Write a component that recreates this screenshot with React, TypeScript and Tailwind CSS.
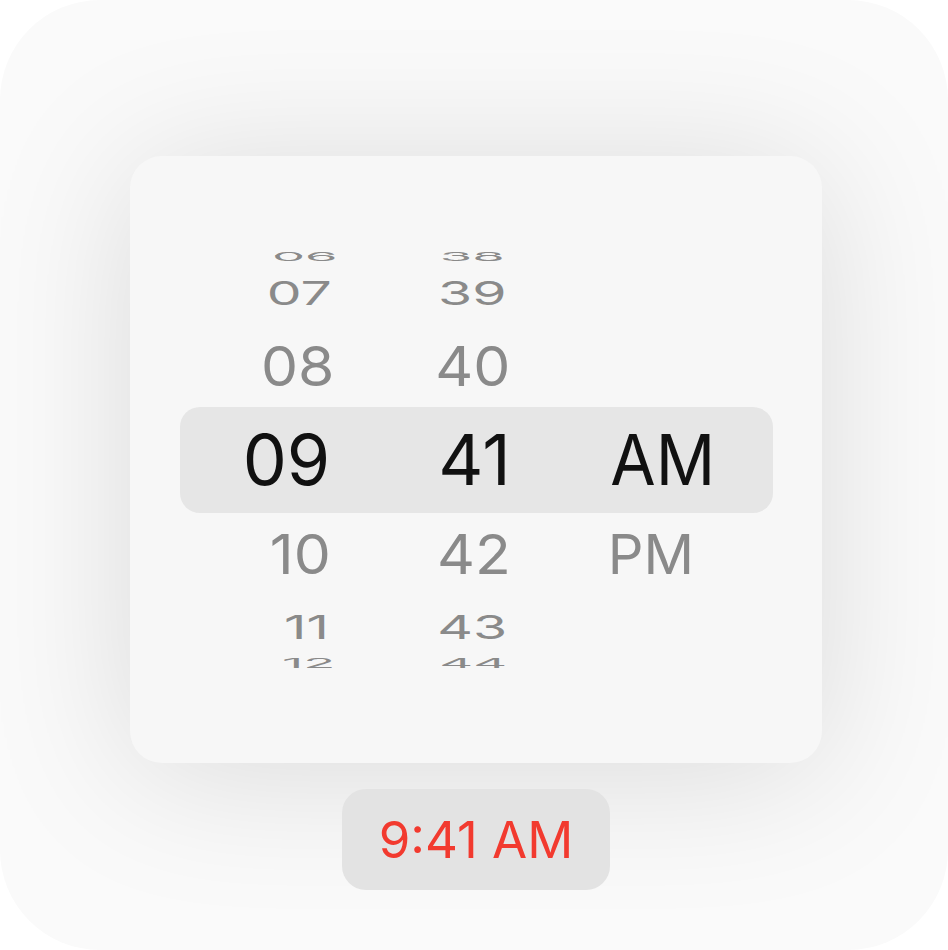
type Row = {
  label: string;
  slot: string;
  text: string;
};

// Wheel rows, top to bottom. The middle row is the selected value; the others
// are squeezed and pulled toward the wheel's vanishing point.
const hours: Row[] = [
  { label: "06", slot: "h-[20px]", text: "scale-x-[0.75] scale-y-[0.18] translate-x-[18px] text-[#8a8a8a]" },
  { label: "07", slot: "h-[52px]", text: "scale-x-[0.79] scale-y-[0.47] translate-x-[13px] text-[#8a8a8a]" },
  { label: "08", slot: "h-[94px]", text: "scale-x-[0.84] scale-y-[0.78] translate-x-[11px] text-[#8a8a8a]" },
  { label: "09", slot: "h-[94px]", text: "text-[#111111]" },
  { label: "10", slot: "h-[94px]", text: "scale-x-[0.84] scale-y-[0.78] translate-x-[14px] text-[#8a8a8a]" },
  { label: "11", slot: "h-[52px]", text: "scale-x-[0.79] scale-y-[0.47] translate-x-[20px] text-[#8a8a8a]" },
  { label: "12", slot: "h-[20px]", text: "scale-x-[0.75] scale-y-[0.18] translate-x-[22px] text-[#8a8a8a]" },
];

const minutes: Row[] = [
  { label: "38", slot: "h-[20px]", text: "scale-x-[0.75] scale-y-[0.18] -translate-x-[2px] text-[#8a8a8a]" },
  { label: "39", slot: "h-[52px]", text: "scale-x-[0.79] scale-y-[0.47] -translate-x-[2px] text-[#8a8a8a]" },
  { label: "40", slot: "h-[94px]", text: "scale-x-[0.84] scale-y-[0.78] -translate-x-[2px] text-[#8a8a8a]" },
  { label: "41", slot: "h-[94px]", text: "text-[#111111]" },
  { label: "42", slot: "h-[94px]", text: "scale-x-[0.84] scale-y-[0.78] -translate-x-[1px] text-[#8a8a8a]" },
  { label: "43", slot: "h-[52px]", text: "scale-x-[0.79] scale-y-[0.47] -translate-x-[2px] text-[#8a8a8a]" },
  { label: "44", slot: "h-[20px]", text: "scale-x-[0.75] scale-y-[0.18] -translate-x-[1px] text-[#8a8a8a]" },
];

const period: Row[] = [
  { label: "", slot: "h-[20px]", text: "" },
  { label: "", slot: "h-[52px]", text: "" },
  { label: "", slot: "h-[94px]", text: "" },
  { label: "AM", slot: "h-[94px]", text: "scale-x-[0.94] text-[#111111]" },
  { label: "PM", slot: "h-[94px]", text: "scale-x-[0.8] scale-y-[0.78] -translate-x-[12px] text-[#8a8a8a]" },
  { label: "", slot: "h-[52px]", text: "" },
  { label: "", slot: "h-[20px]", text: "" },
];

function Wheel({ rows }: { rows: Row[] }) {
  return (
    <div className="flex h-[416px] w-[188px] flex-col justify-center overflow-hidden">
      <div className="flex shrink-0 flex-col">
        {rows.map((row, i) => (
          <div key={i} className={`flex shrink-0 items-center justify-center ${row.slot}`}>
            <span className={`text-[70px] leading-none whitespace-nowrap ${row.text}`}>
              {row.label}
            </span>
          </div>
        ))}
      </div>
    </div>
  );
}

export default function App() {
  return (
    <div className="bg-white" style={{ fontFamily: "Inter, 'Liberation Sans', sans-serif" }}>
      <div className="flex h-[950px] w-[948px] flex-col items-center overflow-hidden rounded-[100px] bg-[#fafafa] pl-[4px] pt-[156px]">
        {/* picker card */}
        <div className="flex h-[607px] w-[692px] items-center justify-center rounded-[32px] bg-[#f7f7f7] shadow-[0_10px_150px_rgba(0,0,0,0.13)]">
          <div className="grid">
            <div className="col-start-1 row-start-1 h-[106px] w-[593px] self-center justify-self-center rounded-[20px] bg-[#e6e6e6]" />
            <div className="col-start-1 row-start-1 mr-[3px] flex justify-center">
              <Wheel rows={hours} />
              <Wheel rows={minutes} />
              <Wheel rows={period} />
            </div>
          </div>
        </div>

        {/* selected time */}
        <div className="mt-[26px] flex h-[101px] w-[268px] items-center justify-center rounded-[24px] bg-[#e3e3e3]">
          <span className="text-[51px] leading-none text-[#f23a2f]">9:41 AM</span>
        </div>
      </div>
    </div>
  );
}
